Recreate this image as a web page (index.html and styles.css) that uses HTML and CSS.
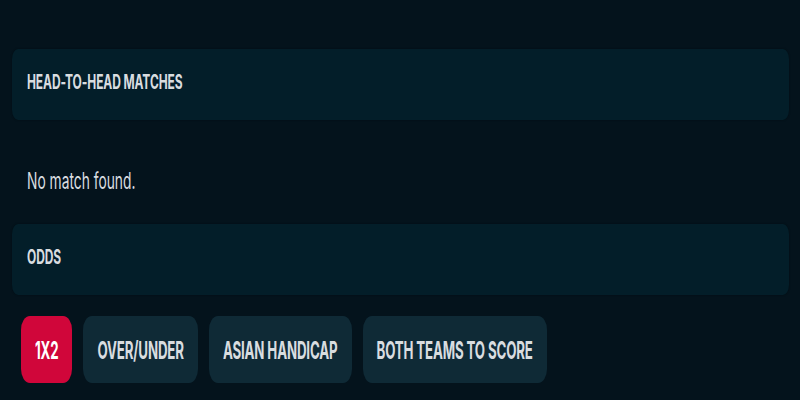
FILE: index.html
```html
<!DOCTYPE html>
<html lang="en">
<head>
<meta charset="utf-8">
<title>Match</title>
<link rel="stylesheet" href="styles.css">
</head>
<body>
<main class="page">
  <section class="panel">
    <h2 class="panel-title"><span class="tall">HEAD-TO-HEAD MATCHES</span></h2>
  </section>
  <p class="empty"><span class="tall">No match found.</span></p>
  <section class="panel">
    <h2 class="panel-title"><span class="tall">ODDS</span></h2>
  </section>
  <nav class="tabs">
    <button class="tab tab-active"><span class="tall-lg">1X2</span></button>
    <button class="tab"><span class="tall-lg">OVER/UNDER</span></button>
    <button class="tab"><span class="tall-lg">ASIAN HANDICAP</span></button>
    <button class="tab"><span class="tall-lg">BOTH TEAMS TO SCORE</span></button>
  </nav>
</main>
</body>
</html>
```

FILE: styles.css
```css
html, body {
  margin: 0;
  background: #04131c;
}
.page {
  padding: 49px 11px 0 12px;
  font-family: Inter, "Liberation Sans", sans-serif;
  color: #d9dde0;
}
/* condensed display type: narrow glyphs stretched vertically */
.tall {
  display: inline-block;
  transform: scaleY(1.62);
}
.tall-lg {
  display: inline-block;
  transform: scaleY(1.87);
}
.panel {
  height: 71px;
  display: flex;
  align-items: center;
  padding: 0 15px;
  background: #031e29;
  border-radius: 6px / 10px;
  box-shadow: 0 0 2px rgba(0, 0, 0, 0.4);
}
.panel-title {
  margin: 0;
  font-size: 12px;
  line-height: 16px;
  font-weight: 700;
  letter-spacing: -0.1px;
  transform: translateY(-2px);
}
.empty {
  margin: 0;
  padding: 50px 15px 30px;
  font-size: 13.8px;
  line-height: 24px;
  transform: translateY(-1px);
}
.tabs {
  display: flex;
  gap: 11px;
  margin-top: 21px;
  padding-left: 9px;
}
.tab {
  height: 67px;
  padding: 0 14px;
  border: 0;
  border-radius: 9px / 14px;
  background: #0f2a36;
  color: #d9dde0;
  font-family: inherit;
  font-size: 13.3px;
  line-height: 16px;
  font-weight: 700;
  letter-spacing: -0.15px;
}
.tab-active {
  background: #d0063a;
  color: #ffffff;
}
```
